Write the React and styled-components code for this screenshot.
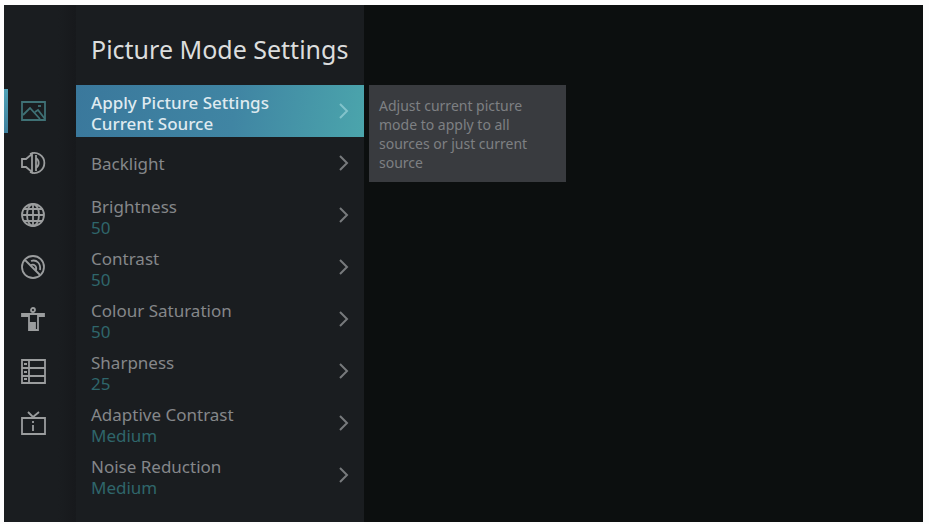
import React, { useState } from "react";

import styled, { createGlobalStyle } from "styled-components";

const GlobalStyle = createGlobalStyle`
  * {
    box-sizing: border-box;
  }

  body {
    margin: 0;
    background: #fdfdfd;
    font-family: "Noto Sans", "Open Sans", sans-serif;
  }
`;

const Screen = styled.div`
  display: flex;
  min-height: calc(100vh - 7px);
  margin: 5px 6px 2px 4px;
  background: #0c0f0f;
`;

const Sidebar = styled.nav`
  display: flex;
  flex-direction: column;
  flex: 0 0 72px;
  padding-top: 80px;
  background: linear-gradient(90deg, #1a1d20 0%, #1a1d20 75%, #17191c 100%);
`;

const SidebarButton = styled.button`
  display: flex;
  align-items: center;
  height: 52px;
  padding: 0 0 0 16px;
  border: 0;
  background: ${(props) =>
    props.$active
      ? "linear-gradient(#50a3b8, #3e7f9c) left center / 4px 44px no-repeat"
      : "none"};
  color: ${(props) => (props.$active ? "#3f7175" : "#9b9d9e")};
  cursor: pointer;
`;

const Panel = styled.main`
  flex: 0 0 288px;
  padding-bottom: 20px;
  background: #1a1d20;
`;

const Title = styled.h1`
  display: flex;
  align-items: center;
  height: 80px;
  margin: 0;
  padding: 8px 0 0 15px;
  color: #dcdddd;
  font-size: 25px;
  font-weight: 400;
  line-height: 32px;
  white-space: nowrap;
`;

const MenuItem = styled.button`
  display: flex;
  align-items: center;
  justify-content: space-between;
  width: 100%;
  height: 52px;
  padding: 0 14px 0 15px;
  border: 0;
  background: ${(props) =>
    props.$active
      ? "linear-gradient(100deg, #3a789c 0%, #4085a3 55%, #4ba5ac 100%)"
      : "none"};
  color: ${(props) => (props.$active ? "#dfeaf0" : "#85878a")};
  font-family: inherit;
  font-size: 17px;
  font-weight: ${(props) => (props.$active ? 500 : 400)};
  line-height: 21px;
  text-align: left;
  cursor: pointer;
`;

const MenuText = styled.span`
  display: flex;
  flex-direction: column;
  padding-top: ${(props) => (props.$hasValue ? "4px" : "0")};
`;

const MenuValue = styled.span`
  color: ${(props) => (props.$active ? "inherit" : "#2f666b")};
`;

const Chevron = styled.svg`
  flex: none;
  color: ${(props) => (props.$active ? "#82c3cb" : "#777a7c")};
`;

const Stage = styled.section`
  flex: 1;
  padding: 80px 5px 0;
`;

const Hint = styled.p`
  width: 197px;
  margin: 0;
  padding: 11px 12px 10px 10px;
  background: #393b3f;
  color: #7e8083;
  font-size: 14px;
  line-height: 19px;
`;

const Icon = ({ children }) => (
  <svg
    width="26"
    height="26"
    viewBox="0 0 26 26"
    fill="none"
    stroke="currentColor"
    strokeWidth="1.8"
    aria-hidden="true"
  >
    {children}
  </svg>
);

const sections = [
  {
    name: "Picture",
    icon: (
      <>
        <path d="M2 4h23v18H2z" />
        <path d="M3 17l7-7 10 11M15 14l3-2 7 9" />
        <path d="M18 8h3" />
      </>
    ),
  },
  {
    name: "Sound",
    icon: (
      <>
        <path d="M2 9v8h4l6 5V4L6 9z" />
        <path d="M10 4a10 10 0 1 1 0 18M16 8a6 6 0 0 1 0 10M16 5v16" />
      </>
    ),
  },
  {
    name: "Network",
    icon: (
      <>
        <circle cx="13" cy="13" r="11" />
        <ellipse cx="13" cy="13" rx="6" ry="11" />
        <path d="M13 2v22M2 13h22M4 7h18M4 19h18" />
      </>
    ),
  },
  {
    name: "Channel",
    icon: (
      <>
        <circle cx="13" cy="13" r="11" />
        <path d="M5 6l15 15M11 7c6-2 10 3 9 9M11 11c3-1 6 1 5 5" />
      </>
    ),
  },
  {
    name: "Accessibility",
    icon: (
      <>
        <circle cx="13" cy="4" r="2" />
        <path d="M2 8h22v2h-6v14H9V10H2z" />
        <path d="M10 17h5v6h-5z" fill="currentColor" />
      </>
    ),
  },
  {
    name: "System",
    icon: (
      <>
        <path d="M2 2h23v23H2zM2 10h23M2 18h23M9 2v23" />
        <path d="M4 6h3M4 14h3M4 21h3" />
      </>
    ),
  },
  {
    name: "Support",
    icon: (
      <>
        <path d="M2 8h23v16H2zM8 2l5 5 6-5" />
        <path d="M13 11v2M13 15v6" />
      </>
    ),
  },
];

const settings = [
  {
    label: "Apply Picture Settings",
    value: "Current Source",
    hint: "Adjust current picture mode to apply to all sources or just current source",
  },
  { label: "Backlight" },
  { label: "Brightness", value: "50" },
  { label: "Contrast", value: "50" },
  { label: "Colour Saturation", value: "50" },
  { label: "Sharpness", value: "25" },
  { label: "Adaptive Contrast", value: "Medium" },
  { label: "Noise Reduction", value: "Medium" },
];

const App = () => {
  const [section, setSection] = useState(0);
  const [selected, setSelected] = useState(0);
  const { hint } = settings[selected];

  return (
    <>
      <GlobalStyle />
      <Screen>
        <Sidebar>
          {sections.map((item, index) => (
            <SidebarButton
              key={item.name}
              type="button"
              aria-label={item.name}
              $active={index === section}
              onClick={() => setSection(index)}
            >
              <Icon>{item.icon}</Icon>
            </SidebarButton>
          ))}
        </Sidebar>
        <Panel>
          <Title>Picture Mode Settings</Title>
          {settings.map((item, index) => {
            const active = index === selected;
            return (
              <MenuItem
                key={item.label}
                type="button"
                $active={active}
                onClick={() => setSelected(index)}
              >
                <MenuText $hasValue={Boolean(item.value)}>
                  <span>{item.label}</span>
                  {item.value && (
                    <MenuValue $active={active}>{item.value}</MenuValue>
                  )}
                </MenuText>
                <Chevron
                  $active={active}
                  width="12"
                  height="16"
                  viewBox="0 0 12 16"
                  fill="none"
                  stroke="currentColor"
                  strokeWidth="2"
                  aria-hidden="true"
                >
                  <path d="M2 1l7 7-7 7" />
                </Chevron>
              </MenuItem>
            );
          })}
        </Panel>
        <Stage>{hint && <Hint>{hint}</Hint>}</Stage>
      </Screen>
    </>
  );
};

export default App;
